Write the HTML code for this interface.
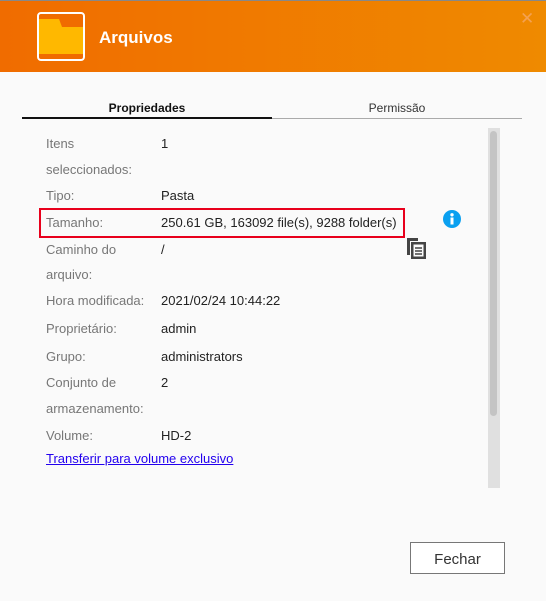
<!DOCTYPE html>
<html><head><style>
body{margin:0;width:546px;height:601px;background:#fafafa;font-family:"Liberation Sans",sans-serif;position:relative;overflow:hidden}
.hdr{position:absolute;left:0;top:0;width:546px;height:72px;background:linear-gradient(90deg,#f06c00,#ef8a00);border-top:1px solid #888;box-sizing:border-box}
.t{position:absolute;font-size:13px;color:#777;white-space:nowrap;line-height:18px}
.v{color:#222}
</style></head><body>
<div class="hdr"></div>
<div style="position:absolute;left:37px;top:12px;width:44px;height:45px;border:2px solid #fff;border-radius:4px;overflow:hidden;background:#f06c00">
 <svg width="44" height="45" viewBox="0 0 44 45"><path d="M0 5H20L23 13H44V40H0Z" fill="#ffb800"/></svg>
</div>
<div style="position:absolute;left:99px;top:28px;color:#fff;font-size:17px;font-weight:bold">Arquivos</div>
<div style="position:absolute;left:520px;top:9px;color:#f6a866;font-size:17px;opacity:.8">✕</div>
<div style="position:absolute;left:22px;top:101px;width:250px;text-align:center;font-size:12px;color:#111;font-weight:bold">Propriedades</div>
<div style="position:absolute;left:272px;top:101px;width:250px;text-align:center;font-size:12px;color:#333">Permissão</div>
<div style="position:absolute;left:22px;top:117px;width:250px;height:2px;background:#111"></div>
<div style="position:absolute;left:272px;top:118px;width:250px;height:1px;background:#aaa"></div>
<div style="position:absolute;left:488px;top:128px;width:12px;height:360px;background:#e0e0e0"></div>
<div style="position:absolute;left:490px;top:131px;width:7px;height:285px;background:#c4c4c4;border-radius:4px"></div>
<div class="t" style="left:46px;top:135px">Itens</div><div class="t v" style="left:161px;top:135px">1</div>
<div class="t" style="left:46px;top:161px">seleccionados:</div>
<div class="t" style="left:46px;top:187px">Tipo:</div><div class="t v" style="left:161px;top:187px">Pasta</div>
<div style="position:absolute;left:39px;top:208px;width:366px;height:30px;border:2.5px solid #e8001c;box-sizing:border-box"></div>
<div class="t" style="left:46px;top:214px">Tamanho:</div><div class="t v" style="left:161px;top:214px">250.61 GB, 163092 file(s), 9288 folder(s)</div>
<svg style="position:absolute;left:443px;top:210px" width="18" height="18"><circle cx="9" cy="9" r="9" fill="#0aa0f0"/><rect x="7.5" y="7.5" width="3" height="7" fill="#fff"/><circle cx="9" cy="4.8" r="1.7" fill="#fff"/></svg>
<svg style="position:absolute;left:405px;top:236px" width="22" height="24"><path d="M2 2h11v3H5v14H2z" fill="#444"/><rect x="6" y="6" width="15" height="17" fill="#444"/><rect x="8.5" y="8.5" width="10" height="12" fill="#fafafa"/><path d="M10 12h7M10 15h7M10 18h7" stroke="#444" stroke-width="1.6"/></svg>
<div class="t" style="left:46px;top:241px">Caminho do</div><div class="t v" style="left:161px;top:241px">/</div>
<div class="t" style="left:46px;top:266px">arquivo:</div>
<div class="t" style="left:46px;top:292px">Hora modificada:</div><div class="t v" style="left:161px;top:292px">2021/02/24 10:44:22</div>
<div class="t" style="left:46px;top:320px">Proprietário:</div><div class="t v" style="left:161px;top:320px">admin</div>
<div class="t" style="left:46px;top:348px">Grupo:</div><div class="t v" style="left:161px;top:348px">administrators</div>
<div class="t" style="left:46px;top:374px">Conjunto de</div><div class="t v" style="left:161px;top:374px">2</div>
<div class="t" style="left:46px;top:400px">armazenamento:</div>
<div class="t" style="left:46px;top:427px">Volume:</div><div class="t v" style="left:161px;top:427px">HD-2</div>
<div class="t" style="left:46px;top:450px;color:#2200ee;text-decoration:underline">Transferir para volume exclusivo</div>
<div style="position:absolute;left:410px;top:542px;width:95px;height:32px;border:1px solid #777;background:#fff;box-sizing:border-box;text-align:center;line-height:33px;font-size:15px;color:#333">Fechar</div>
</body></html>
